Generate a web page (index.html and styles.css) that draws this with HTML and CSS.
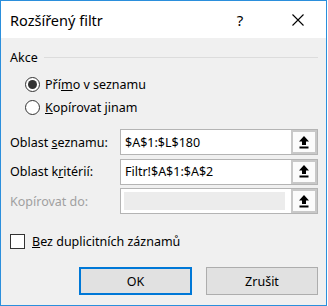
FILE: index.html
```
<!DOCTYPE html>
<html lang="cs">
<head>
<meta charset="utf-8">
<link rel="stylesheet" href="styles.css">
</head>
<body>
<div class="dialog">
  <div class="titlebar">
    <span class="title">Rozšířený filtr</span>
    <span class="help">?</span>
    <span class="close">
      <svg width="12" height="12" viewBox="0 0 12 12"><path d="M0.5 0.5 L11.5 11.5 M11.5 0.5 L0.5 11.5" stroke="#000" stroke-width="1.1" fill="none"/></svg>
    </span>
  </div>
  <div class="body">
    <div class="group-head"><span>Akce</span><span class="rule"></span></div>
    <div class="radio-row first"><span class="radio checked"></span><span>Pří<u>m</u>o v seznamu</span></div>
    <div class="radio-row"><span class="radio"></span><span><u>K</u>opírovat jinam</span></div>

    <div class="fields">
      <span class="label">Oblast <u>s</u>eznamu:</span>
      <div class="field"><span class="value">$A$1:$L$180</span><span class="pick"><svg width="10" height="13" viewBox="0 0 10 13"><path d="M5 0 L10 5.5 H7 V9 H3 V5.5 H0 Z" fill="#000"/><rect x="0.5" y="10.5" width="9" height="2" fill="#000"/></svg></span></div>

      <span class="label">Oblast k<u>r</u>itérií:</span>
      <div class="field"><span class="value">Filtr!$A$1:$A$2</span><span class="pick"><svg width="10" height="13" viewBox="0 0 10 13"><path d="M5 0 L10 5.5 H7 V9 H3 V5.5 H0 Z" fill="#000"/><rect x="0.5" y="10.5" width="9" height="2" fill="#000"/></svg></span></div>

      <span class="label disabled">Kopírovat do:</span>
      <div class="field off"><span class="value"></span><span class="pick"><svg width="10" height="13" viewBox="0 0 10 13"><path d="M5 0 L10 5.5 H7 V9 H3 V5.5 H0 Z" fill="#000"/><rect x="0.5" y="10.5" width="9" height="2" fill="#000"/></svg></span></div>
    </div>

    <div class="check-row"><span class="check"></span><span><u>B</u>ez duplicitních záznamů</span></div>

    <div class="buttons">
      <button class="btn default">OK</button>
      <button class="btn">Zrušit</button>
    </div>
  </div>
</div>
</body>
</html>
```
FILE: styles.css
```
* { box-sizing: border-box; }
html, body { margin: 0; padding: 0; background: #fff; }
body { font-family: "Noto Sans", "Open Sans", sans-serif; font-size: 12.5px; color: #000; }

.dialog {
  width: 327px;
  height: 306px;
  border: 1px solid #2b8fdc;
  display: flex;
  flex-direction: column;
}

.titlebar {
  height: 37px;
  background: #fff;
  display: flex;
  align-items: center;
  padding-left: 9px;
  padding-right: 5px;
}
.title { flex: 1; font-size: 14.5px; }
.help { width: 30px; text-align: center; font-size: 15px; margin-right: 20px; }
.close { width: 46px; display: flex; justify-content: center; }

.body {
  flex: 1;
  background: #f0f0f0;
  padding: 10px 8px 0 9px;
}

.group-head {
  display: flex;
  align-items: center;
  height: 18px;
}
.group-head .rule {
  flex: 1;
  height: 1px;
  background: #dcdcdc;
  margin-left: 6px;
  margin-top: 1px;
}

.radio-row {
  display: flex;
  align-items: center;
  height: 23px;
  padding-left: 15px;
}
.radio-row.first { margin-top: 7px; }
.radio {
  width: 15px;
  height: 15px;
  border: 1px solid #333;
  border-radius: 50%;
  background: #fff;
  margin-right: 5px;
  display: flex;
  align-items: center;
  justify-content: center;
}
.radio.checked::after {
  content: "";
  width: 9px;
  height: 9px;
  border-radius: 50%;
  background: #333;
}

.fields {
  margin-top: 10px;
  display: grid;
  grid-template-columns: 110px 1fr;
  grid-template-rows: 26px 26px 26px;
  row-gap: 3.5px;
  align-items: center;
}
.label.disabled { color: #a0a0a0; }

.field {
  height: 26px;
  border: 1px solid #b4b4b4;
  background: #fff;
  display: flex;
  align-items: stretch;
}
.value {
  flex: 1;
  padding-left: 4px;
  display: flex;
  align-items: center;
}
.field.off .value {
  background: #ececec;
  margin: 3px 6px 3px 3px;
}
.pick {
  width: 26px;
  border: 2px solid #c8c8c8;
  background: #fbfbfb;
  display: flex;
  align-items: center;
  justify-content: center;
}

.check-row {
  margin-top: 18px;
  height: 18px;
  display: flex;
  align-items: center;
}
.check {
  width: 15px;
  height: 15px;
  border: 1px solid #333;
  background: #fff;
  margin-right: 7px;
}

.buttons {
  margin-top: 17px;
  display: flex;
  justify-content: flex-end;
  gap: 14px;
}
.btn {
  font-family: inherit;
  font-size: 12.5px;
  color: #000;
  width: 112px;
  height: 28px;
  background: #e1e1e1;
  border: 1px solid #adadad;
  padding: 0;
}
.btn.default {
  width: 113px;
  border: 2px solid #0078d7;
}
```
